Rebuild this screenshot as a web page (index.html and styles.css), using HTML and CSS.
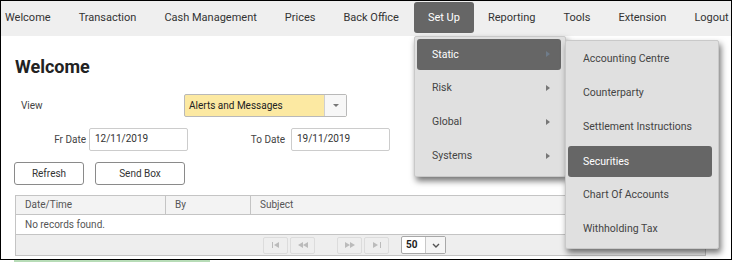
FILE: index.html
```html
<!DOCTYPE html>
<html>
<head>
  <title>Welcome</title>
  <link rel="stylesheet" href="styles.css">
</head>
<body>
  <div class="frame">
    <ul class="nav">
      <li>Welcome</li>
      <li>Transaction</li>
      <li>Cash Management</li>
      <li>Prices</li>
      <li>Back Office</li>
      <li class="active">Set Up</li>
      <li>Reporting</li>
      <li>Tools</li>
      <li>Extension</li>
      <li>Logout</li>
    </ul>

    <div class="content">
      <h1>Welcome</h1>

      <div class="row view-row">
        <label class="view-label">View</label>
        <div class="select">
          <span class="select-value">Alerts and Messages</span>
          <span class="select-btn"><span class="caret"></span></span>
        </div>
      </div>

      <div class="row date-row">
        <label class="date-label fr">Fr Date</label>
        <input type="text" class="date-input" value="12/11/2019">
        <label class="date-label to">To Date</label>
        <input type="text" class="date-input" value="19/11/2019">
      </div>

      <div class="row btn-row">
        <button class="btn refresh">Refresh</button>
        <button class="btn sendbox">Send Box</button>
      </div>

      <div class="grid">
        <div class="grid-head">
          <div class="col c1">Date/Time</div>
          <div class="col c2">By</div>
          <div class="col c3">Subject</div>
        </div>
        <div class="grid-row">No records found.</div>
        <div class="pager">
          <span class="pg first"><svg width="8" height="6" viewBox="0 0 8 6"><rect x="0" y="0" width="1" height="6" fill="#bbb"/><path d="M7 0 L2 3 L7 6 Z" fill="#bbb"/></svg></span>
          <span class="pg prev"><svg width="10" height="6" viewBox="0 0 10 6"><path d="M5 0 L0 3 L5 6 Z M10 0 L5 3 L10 6 Z" fill="#bbb"/></svg></span>
          <span class="pg next"><svg width="10" height="6" viewBox="0 0 10 6"><path d="M0 0 L5 3 L0 6 Z M5 0 L10 3 L5 6 Z" fill="#bbb"/></svg></span>
          <span class="pg last"><svg width="8" height="6" viewBox="0 0 8 6"><path d="M0 0 L5 3 L0 6 Z" fill="#bbb"/><rect x="7" y="0" width="1" height="6" fill="#bbb"/></svg></span>
          <span class="page-size">
            <span class="size-value">50</span>
            <span class="size-btn"><svg width="8" height="5" viewBox="0 0 8 5"><path d="M1 1 L4 4 L7 1" fill="none" stroke="#555" stroke-width="1.4"/></svg></span>
          </span>
        </div>
      </div>
    </div>

    <!-- Set Up dropdown -->
    <ul class="menu menu-main">
      <li class="hl">Static<span class="arrow"></span></li>
      <li>Risk<span class="arrow"></span></li>
      <li>Global<span class="arrow"></span></li>
      <li>Systems<span class="arrow"></span></li>
    </ul>
    <ul class="menu menu-sub">
      <li>Accounting Centre</li>
      <li>Counterparty</li>
      <li>Settlement Instructions</li>
      <li class="hl">Securities</li>
      <li>Chart Of Accounts</li>
      <li>Withholding Tax</li>
    </ul>
  </div>
  <div class="status"></div>
</body>
</html>
```

FILE: styles.css
```css
body {
  margin: 0;
  font-family: Roboto, "Liberation Sans", Arial, sans-serif;
  background: #fff;
  color: #333;
}

.frame {
  position: relative;
  box-sizing: border-box;
  width: 732px;
  height: 260px;
  border: 1px solid #000;
  overflow: hidden;
}

/* top navigation */
.nav {
  display: flex;
  list-style: none;
  margin: 0;
  padding: 0 0 0 4px;
  height: 35px;
  background: #efefef;
  white-space: nowrap;
}

.nav li {
  padding: 0 14px;
  line-height: 33px;
  font-size: 11px;
  color: #333;
}

.nav li:first-child {
  padding-left: 0;
}

.nav li.active {
  margin-top: 1px;
  margin-left: 1px;
  height: 31px;
  line-height: 31px;
  padding: 0 14px;
  background: #666;
  color: #fff;
  border-radius: 3px;
}

/* page body */
.content {
  padding: 0 0 0 13px;
}

h1 {
  margin: 0;
  padding: 20px 0 0 1px;
  height: 38px;
  font-size: 18px;
  font-weight: bold;
  color: #222;
  line-height: 22px;
}

.row {
  display: flex;
  align-items: center;
}

.view-row {
  height: 23px;
  font-size: 10px;
}

.view-label {
  width: 163px;
  padding-left: 7px;
  color: #444;
}

.select {
  display: flex;
  width: 161px;
  height: 21px;
  border: 1px solid #b9b9b9;
  border-radius: 2px;
  background: #fce9a2;
}

.select-value {
  flex: 1;
  line-height: 21px;
  padding-left: 4px;
  font-size: 10px;
  color: #222;
}

.select-btn {
  display: flex;
  align-items: center;
  justify-content: center;
  width: 21px;
  border-left: 1px solid #cfcfcf;
  background: #f7f7f7;
}

.caret {
  width: 0;
  height: 0;
  border-left: 3px solid transparent;
  border-right: 3px solid transparent;
  border-top: 3px solid #777;
}

.date-row {
  margin-top: 11px;
  height: 23px;
  font-size: 10px;
}

.date-label {
  text-align: right;
  color: #444;
}

.date-label.fr {
  width: 72px;
  margin-right: 3px;
}

.date-label.to {
  width: 97px;
  margin-right: 6px;
}

.date-input {
  box-sizing: border-box;
  width: 99px;
  height: 23px;
  padding: 0 0 2px 5px;
  border: 1px solid #cccccc;
  border-radius: 2px;
  font-family: inherit;
  font-size: 10px;
  color: #333;
}

.btn-row {
  margin-top: 11px;
  height: 23px;
}

.btn {
  box-sizing: border-box;
  height: 23px;
  border: 1px solid #8a8a8a;
  border-radius: 3px;
  background: #fff;
  font-family: inherit;
  font-size: 10px;
  color: #333;
  padding: 0;
}

.btn.refresh {
  width: 70px;
}

.btn.sendbox {
  width: 90px;
  margin-left: 11px;
}

/* records grid */
.grid {
  margin-top: 10px;
  margin-left: 1px;
  width: 689px;
  border: 1px solid #c4c4c4;
  font-size: 10px;
  color: #555;
}

.grid-head {
  display: flex;
  height: 18px;
  background: #f3f3f3;
  border-bottom: 1px solid #c4c4c4;
}

.col {
  line-height: 18px;
  padding-left: 9px;
  box-sizing: border-box;
}

.col.c1 {
  width: 150px;
  border-right: 1px solid #c4c4c4;
}

.col.c2 {
  width: 85px;
  border-right: 1px solid #c4c4c4;
}

.grid-row {
  height: 19px;
  line-height: 19px;
  padding-left: 9px;
  border-bottom: 1px solid #c4c4c4;
  background: #fff;
}

.pager {
  display: flex;
  align-items: center;
  height: 20px;
  background: #eeeeee;
  padding-left: 247px;
}

.pg {
  display: flex;
  align-items: center;
  justify-content: center;
  box-sizing: border-box;
  width: 25px;
  height: 17px;
  border: 1px solid #dcdcdc;
  border-radius: 2px;
  margin-right: 2px;
}

.pg.next {
  margin-left: 20px;
}

.page-size {
  display: flex;
  margin-left: 10px;
  height: 16px;
  border: 1px solid #a8a8a8;
  border-radius: 2px;
  background: #fff;
}

.size-value {
  width: 23px;
  line-height: 15px;
  padding-left: 4px;
  box-sizing: border-box;
  font-weight: bold;
  color: #222;
}

.size-btn {
  display: flex;
  align-items: center;
  justify-content: center;
  width: 19px;
  border-left: 1px solid #c8c8c8;
  background: #f5f5f5;
}

/* dropdown menus */
.menu {
  position: absolute;
  list-style: none;
  margin: 0;
  background: #e0e0e0;
  border: 1px solid #c9c9c9;
  border-radius: 2px;
  box-shadow: 2px 4px 6px rgba(0, 0, 0, 0.55);
  font-size: 10.5px;
  color: #444;
}

.menu li {
  position: relative;
  height: 34px;
  line-height: 34px;
  padding-left: 15px;
  border-radius: 3px;
}

.menu li.hl {
  background: #666;
  color: #fff;
  height: 31px;
  line-height: 31px;
  margin: 2px 0 1px;
}

.menu-main {
  left: 413px;
  top: 35px;
  width: 144px;
  padding: 0 4px 3px 2px;
}

.arrow {
  position: absolute;
  right: 11px;
  top: 14px;
  width: 0;
  height: 0;
  border-top: 3px solid transparent;
  border-bottom: 3px solid transparent;
  border-left: 4px solid #777;
}

.menu-main li.hl .arrow {
  top: 12px;
  border-left-color: #6f7c8a;
}

.menu-sub {
  left: 564px;
  top: 39px;
  width: 144px;
  padding: 1px 6px 2px 2px;
}

.status {
  margin-left: 14px;
  width: 196px;
  height: 2px;
  background: #b7dcb7;
}
```
